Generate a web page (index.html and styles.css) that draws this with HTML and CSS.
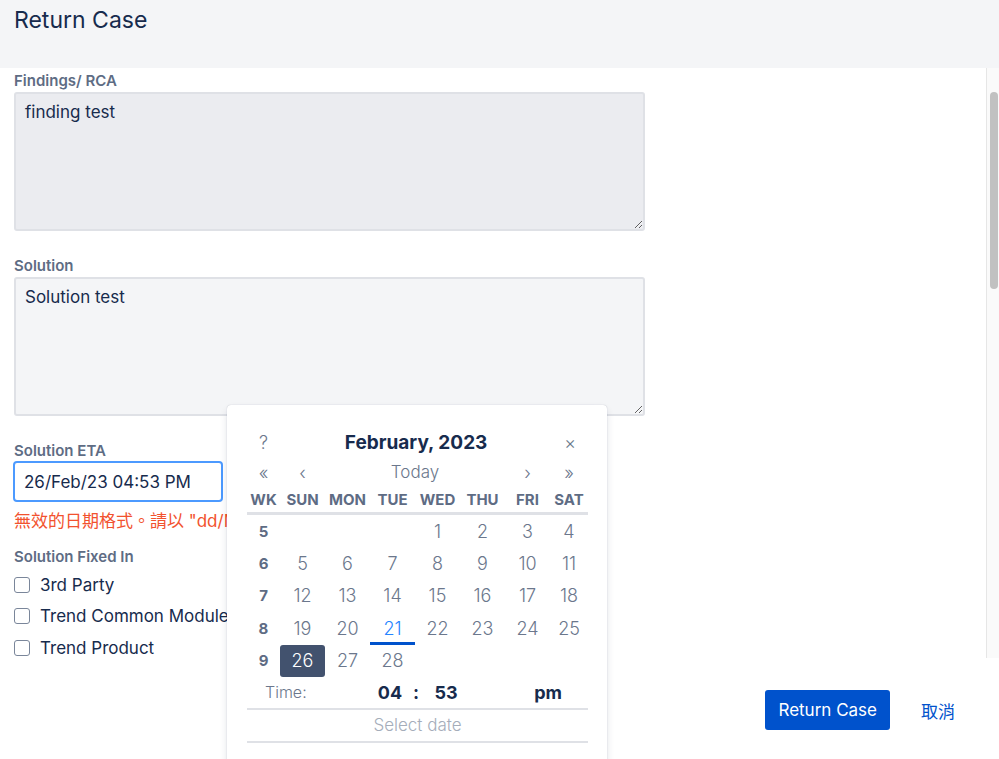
FILE: index.html
```html
<!DOCTYPE html>
<html lang="en">
<head>
	<meta charset="UTF-8">
	<title>Return Case</title>
	<link rel="stylesheet" href="styles.css">
</head>
<body>
	<div class="modal">
		<header class="modal-header">
			<h1>Return Case</h1>
		</header>

		<div class="modal-body">
			<div class="content">
				<div class="field">
					<label>Findings/ RCA</label>
					<textarea class="hovered">finding test</textarea>
				</div>
				<div class="field">
					<label>Solution</label>
					<textarea>Solution test</textarea>
				</div>
				<div class="field has-error">
					<label>Solution ETA</label>
					<input type="text" class="date-input" value="26/Feb/23 04:53 PM">
					<div class="error">無效的日期格式。請以 "dd/MMM/yy hh:mm a" 格式輸入。</div>
				</div>
				<div class="field">
					<label>Solution Fixed In</label>
					<div class="checks">
						<div class="check-row"><span class="box"></span>3rd Party</div>
						<div class="check-row"><span class="box"></span>Trend Common Module</div>
						<div class="check-row"><span class="box"></span>Trend Product</div>
					</div>
				</div>
			</div>
			<div class="scrollbar"><div class="thumb"></div></div>
		</div>

		<footer class="modal-footer">
			<button class="btn-primary">Return Case</button>
			<a href="#" class="btn-link">取消</a>
		</footer>
	</div>

	<!-- calendar popup -->
	<div class="calendar">
		<div class="cal-title">
			<span class="cal-btn">?</span>
			<span class="month">February, 2023</span>
			<span class="cal-btn">×</span>
		</div>
		<div class="cal-nav">
			<span>«</span>
			<span>‹</span>
			<span class="today">Today</span>
			<span>›</span>
			<span>»</span>
		</div>
		<div class="cal-grid head">
			<span>WK</span><span>SUN</span><span>MON</span><span>TUE</span><span>WED</span><span>THU</span><span>FRI</span><span>SAT</span>
		</div>
		<div class="cal-grid days">
			<span class="wk">5</span><span></span><span></span><span></span><span>1</span><span>2</span><span>3</span><span>4</span>
			<span class="wk">6</span><span>5</span><span>6</span><span>7</span><span>8</span><span>9</span><span>10</span><span>11</span>
			<span class="wk">7</span><span>12</span><span>13</span><span>14</span><span>15</span><span>16</span><span>17</span><span>18</span>
			<span class="wk">8</span><span>19</span><span>20</span><span class="is-today">21</span><span>22</span><span>23</span><span>24</span><span>25</span>
			<span class="wk">9</span><span class="selected">26</span><span>27</span><span>28</span><span></span><span></span><span></span><span></span>
		</div>
		<div class="cal-time">
			<span class="time-label">Time:</span>
			<span class="hh">04</span>
			<span class="colon">:</span>
			<span class="mm">53</span>
			<span class="ampm">pm</span>
		</div>
		<div class="cal-status">Select date</div>
	</div>
</body>
</html>
```

FILE: styles.css
```css
*{
	margin: 0;
	padding: 0;
	box-sizing: border-box;
}

html, body{
	height: 100%;
	overflow: hidden;
}

body{
	font-family: Inter, "Noto Sans CJK TC", sans-serif;
	color: #172b4d;
	background-color: #fff;
}

.modal{
	display: flex;
	flex-direction: column;
	height: 100%;
}

.modal-header{
	height: 68px;
	flex-shrink: 0;
	background-color: #f4f5f7;
	padding: 5px 14px 0;
}

.modal-header h1{
	font-size: 23px;
	font-weight: 400;
	line-height: 30px;
}

/* body + fake scrollbar */
.modal-body{
	display: flex;
	height: 590px;
	flex-shrink: 0;
}

.content{
	flex: 1;
	padding: 3px 14px 0;
}

.scrollbar{
	width: 13px;
	background-color: #fafafa;
	border-left: 1px solid #e6e6e6;
	padding: 24px 0 0 3px;
}

.scrollbar .thumb{
	width: 8px;
	height: 197px;
	background-color: #c1c1c1;
	border-radius: 4px;
}

.field{
	margin-bottom: 25px;
}

.field.has-error{
	margin-bottom: 15px;
}

.field label{
	display: block;
	font-size: 15px;
	font-weight: 600;
	line-height: 20px;
	color: #5e6c84;
}

.field textarea{
	display: block;
	width: 631px;
	height: 139px;
	margin-top: 1px;
	padding: 6px 9px;
	font-family: inherit;
	font-size: 17px;
	line-height: 24px;
	color: #172b4d;
	background-color: #f4f5f7;
	border: 2px solid #dfe1e6;
	border-radius: 3px;
	outline: none;
}

.field textarea.hovered{
	background-color: #ebecf0;
}

.date-input{
	display: block;
	width: 210px;
	height: 41px;
	margin-left: -1px;
	padding: 0 9px;
	font-family: inherit;
	font-size: 17px;
	color: #172b4d;
	background-color: #fff;
	border: 2px solid #4c9aff;
	border-radius: 4px;
	outline: none;
}

/* popup covers the rest of the message */
.error{
	width: 213px;
	margin-top: 8px;
	font-size: 17px;
	line-height: 22px;
	color: #f2522e;
	white-space: nowrap;
	overflow: hidden;
}

.checks{
	padding-top: 2px;
}

.check-row{
	display: flex;
	align-items: center;
	height: 31.5px;
	font-size: 17px;
	white-space: nowrap;
}

.check-row .box{
	width: 16px;
	height: 16px;
	margin-right: 10px;
	border: 1.5px solid #7a869a;
	border-radius: 3px;
}

.modal-footer{
	flex: 1;
	display: flex;
	align-items: center;
	justify-content: flex-end;
	padding: 3px 32px 0 0;
	gap: 19px;
	background-color: #fff;
}

.btn-primary{
	height: 40px;
	padding: 0 13px;
	font-family: inherit;
	font-size: 17px;
	color: #fff;
	background-color: #0052cc;
	border: none;
	border-radius: 3px;
}

.btn-link{
	padding: 0 12px;
	font-size: 17px;
	color: #0052cc;
	text-decoration: none;
}

/* calendar */
.calendar{
	position: absolute;
	left: 227px;
	top: 405px;
	width: 380px;
	height: 400px;
	padding: 22px 19px 0 20px;
	background-color: #fff;
	border-radius: 4px;
	box-shadow: 0 4px 10px -2px rgba(9,30,66,.2), 0 0 1px rgba(9,30,66,.3);
}

.cal-title{
	display: flex;
	align-items: center;
	justify-content: space-between;
	height: 30px;
	padding: 0 12px 0 12px;
}

.cal-btn{
	font-size: 18px;
	font-weight: 300;
	color: #6b778c;
}

.month{
	font-size: 19px;
	font-weight: 700;
}

.cal-nav{
	display: grid;
	grid-template-columns: 33px 45px 1fr 45px 38px;
	height: 30px;
	align-items: center;
	text-align: center;
	font-size: 18px;
	font-weight: 300;
	color: #6b778c;
}

.cal-nav .today{
	font-size: 17px;
}

.cal-grid{
	display: grid;
	grid-template-columns: 33px repeat(6, 45px) 38px;
	text-align: center;
}

.cal-grid.head{
	height: 28px;
	padding-top: 3px;
	font-size: 15px;
	font-weight: 700;
	color: #5e6c84;
	border-bottom: 3px solid #dfe1e6;
}

.cal-grid.days{
	grid-auto-rows: 32.4px;
	align-items: center;
	font-size: 18px;
	font-weight: 300;
	color: #6b778c;
}

.cal-grid.days span{
	height: 100%;
	display: flex;
	align-items: center;
	justify-content: center;
}

.cal-grid .wk{
	font-size: 15px;
	font-weight: 700;
	color: #5e6c84;
}

.cal-grid .is-today{
	color: #2684ff;
	border-bottom: 3px solid #0052cc;
	padding-top: 3px;
}

.cal-grid .selected{
	color: #fff;
	background-color: #42526e;
	border-radius: 3px;
}

.cal-time{
	display: grid;
	grid-template-columns: 107px 36px 16px 44px 1fr;
	align-items: center;
	height: 33px;
	padding: 0 26px 0 18px;
	font-size: 18px;
	font-weight: 700;
	border-bottom: 2px solid #dfe1e6;
}

.cal-time span{
	text-align: center;
}

.cal-time .time-label{
	text-align: left;
	font-size: 16px;
	font-weight: 300;
	color: #6b778c;
}

.cal-time .ampm{
	text-align: right;
}

.cal-status{
	height: 33px;
	line-height: 31px;
	text-align: center;
	font-size: 17px;
	font-weight: 300;
	color: #a5adba;
	border-bottom: 2px solid #dfe1e6;
}
```
